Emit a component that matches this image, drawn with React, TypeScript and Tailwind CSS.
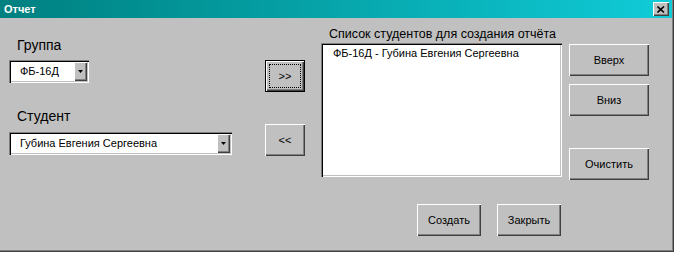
const font = { fontFamily: '"Liberation Sans", Arial, sans-serif' };

function Raised({
  label,
  className,
  isDefault,
}: {
  label: string;
  className: string;
  isDefault?: boolean;
}) {
  if (isDefault) {
    return (
      <button
        className={`${className} relative flex items-center justify-center border border-black bg-[#c0c0c0] text-[11px] text-black shadow-[inset_1px_1px_#ffffff,inset_-1px_-1px_#404040,inset_-2px_-2px_#808080]`}
      >
        <span className="absolute inset-[3px] border border-dotted border-black" />
        <span className="relative">{label}</span>
      </button>
    );
  }
  return (
    <button
      className={`${className} flex items-center justify-center bg-[#c0c0c0] text-[11px] text-black shadow-[inset_1px_1px_#ffffff,inset_-1px_-1px_#404040,inset_-2px_-2px_#808080]`}
    >
      {label}
    </button>
  );
}

function Combo({ value, className }: { value: string; className: string }) {
  return (
    <div
      className={`${className} flex h-[23px] items-center bg-white p-[2px] shadow-[inset_1px_1px_#808080,inset_2px_2px_#000000,inset_-1px_-1px_#ffffff,inset_-2px_-2px_#c0c0c0]`}
    >
      <span className="flex-1 pl-[9px] text-[11px] leading-[19px] text-black">{value}</span>
      <span className="flex h-[19px] w-[13px] items-center justify-center bg-[#c0c0c0] shadow-[inset_1px_1px_#ffffff,inset_-1px_-1px_#404040,inset_-2px_-2px_#808080]">
        <svg width="5" height="3" viewBox="0 0 5 3">
          <path d="M0 0h5L2.5 3z" fill="#000" />
        </svg>
      </span>
    </div>
  );
}

export default function App() {
  return (
    <div className="h-[255px] w-[675px] bg-white" style={font}>
      {/* window */}
      <div className="h-[252px] w-[674px] bg-[#c0c0c0] pb-[2px] pr-[2px] shadow-[inset_-1px_-1px_#404040,inset_-2px_-2px_#808080]">
        {/* title bar */}
        <div className="flex h-[18px] items-center justify-between bg-gradient-to-r from-[#008080] to-[#10ccd8] pl-[4px] pr-[3px]">
          <span className="text-[11px] font-bold leading-[18px] text-white">Отчет</span>
          <span className="flex h-[14px] w-[16px] items-center justify-center bg-[#c0c0c0] shadow-[inset_1px_1px_#ffffff,inset_-1px_-1px_#404040,inset_-2px_-2px_#808080]">
            <svg width="8" height="7" viewBox="0 0 8 7">
              <path d="M0.5 0.5L7 6.5M7 0.5L0.5 6.5" stroke="#000" strokeWidth="1.6" />
            </svg>
          </span>
        </div>

        {/* body */}
        <div className="flex">
          {/* left column */}
          <div className="ml-[9px] flex w-[223px] flex-col">
            <div className="mt-[19px] h-[16px] pl-[8px] text-[14px] leading-[16px] text-black">Группа</div>
            <Combo value="ФБ-16Д" className="mt-[7px] w-[80px]" />
            <div className="mt-[25px] h-[16px] pl-[8px] text-[14px] leading-[16px] text-black">Студент</div>
            <Combo value="Губина Евгения Сергеевна" className="mt-[8px] w-[223px]" />
          </div>

          {/* move buttons */}
          <div className="ml-[33px] flex w-[40px] flex-col">
            <Raised label=">>" isDefault className="mt-[42px] h-[32px] w-[40px]" />
            <Raised label="<<" className="mt-[32px] h-[32px] w-[40px]" />
          </div>

          {/* list */}
          <div className="ml-[16px] flex w-[241px] flex-col">
            <div className="mt-[8px] h-[16px] whitespace-nowrap pl-[8px] text-[12.5px] leading-[16px] text-black">
              Список студентов для создания отчёта
            </div>
            <div className="mt-[1px] h-[134px] bg-white px-[12px] py-[3px] shadow-[inset_1px_1px_#808080,inset_2px_2px_#000000,inset_-1px_-1px_#ffffff,inset_-2px_-2px_#c0c0c0]">
              <div className="text-[11px] leading-[14px] text-black">ФБ-16Д - Губина Евгения Сергеевна</div>
            </div>
            <div className="mt-[27px] flex gap-[16px] pl-[96px]">
              <Raised label="Создать" className="h-[32px] w-[64px]" />
              <Raised label="Закрыть" className="h-[32px] w-[64px]" />
            </div>
          </div>

          {/* right buttons */}
          <div className="ml-[7px] flex w-[80px] flex-col">
            <Raised label="Вверх" className="mt-[26px] h-[32px] w-[80px]" />
            <Raised label="Вниз" className="mt-[8px] h-[32px] w-[80px]" />
            <Raised label="Очистить" className="mt-[32px] h-[32px] w-[80px]" />
          </div>
        </div>
      </div>
    </div>
  );
}
